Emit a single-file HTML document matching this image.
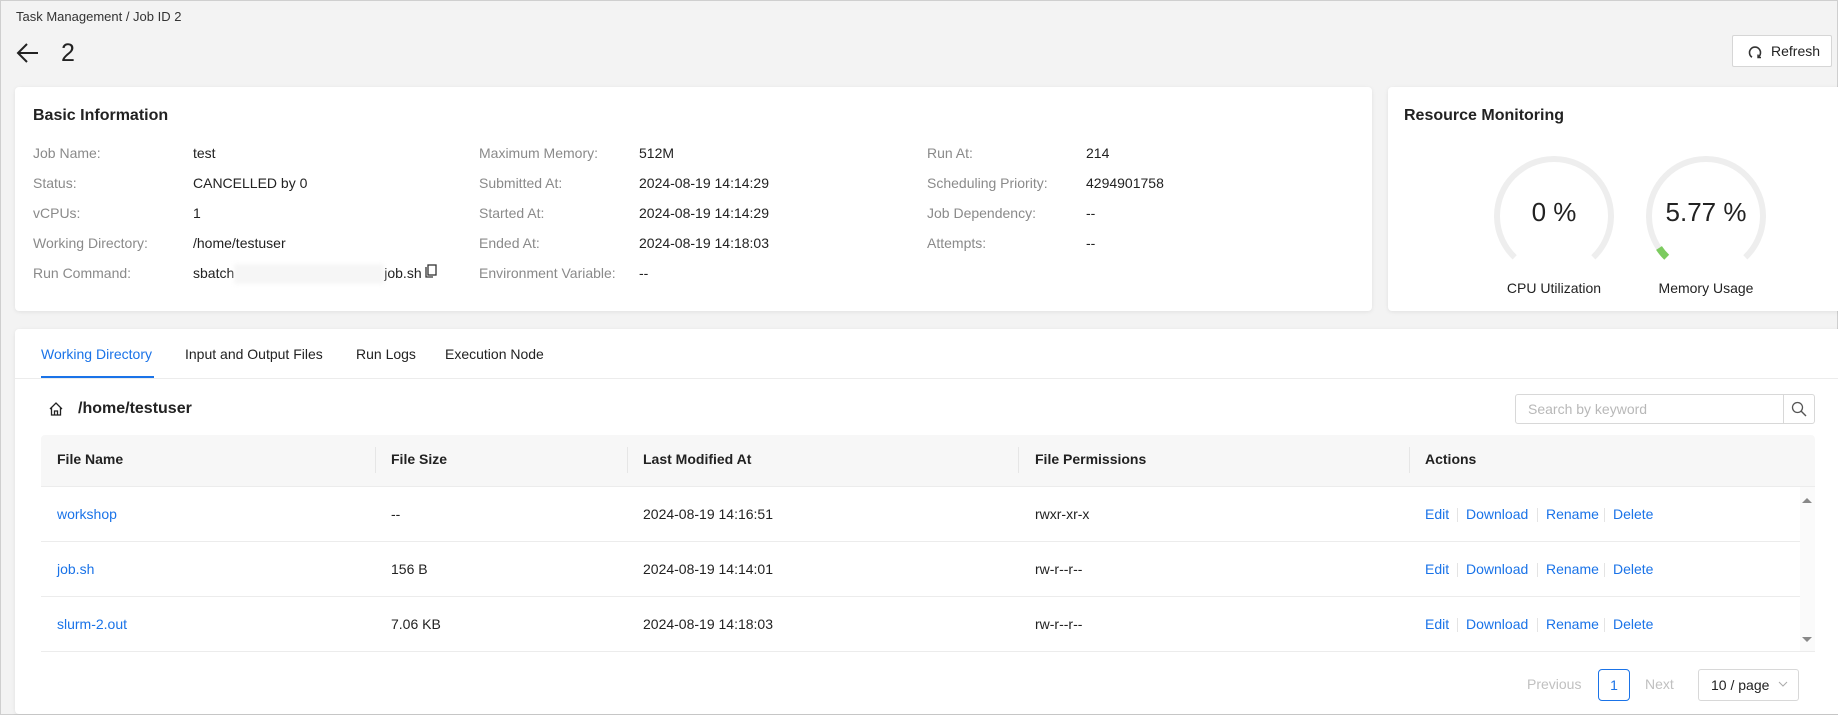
<!DOCTYPE html>
<html><head><meta charset="utf-8"><style>
*{box-sizing:border-box;margin:0;padding:0}
body{width:1838px;height:715px;background:#f3f3f3;font-family:"Liberation Sans",sans-serif;color:#222;position:relative;overflow:hidden;border:1px solid #cfcfcf;font-size:14px}
.a{position:absolute;white-space:nowrap}
.card{position:absolute;background:#fff;border-radius:4px;box-shadow:0 1px 4px rgba(0,0,0,.08)}
.lbl{color:#8a8a8a}
.blue{color:#1a73e8}
.hd{font-weight:bold;font-size:16px;color:#222}
.sep{position:absolute;width:1px;height:14px;background:#e4e4e4}
.line{position:absolute;height:1px;background:#ececec}
</style></head><body>
<div class="a" style="left:15px;top:8px;font-size:13px;color:#333">Task Management / Job ID 2</div>
<svg class="a" style="left:15px;top:41px" width="24" height="22" viewBox="0 0 24 22"><path d="M22 11H3M11 2L2 11l9 9" stroke="#222" stroke-width="2" fill="none"/></svg>
<div class="a" style="left:60px;top:38px;font-size:25px;color:#222">2</div>
<div class="a" style="left:1731px;top:34px;width:100px;height:32px;background:#fff;border:1px solid #d6d6d6;border-radius:2px;font-size:14px;line-height:30px;padding-left:38px">Refresh</div>
<svg class="a" style="left:1747px;top:44px" width="14" height="14" viewBox="0 0 14 14"><path d="M4 12.2A5.5 5.5 0 1 1 10 12.2" stroke="#333" stroke-width="1.6" fill="none"/><path d="M10 9.5v3h3" stroke="#333" stroke-width="1.4" fill="none"/></svg>

<div class="card" style="left:14px;top:86px;width:1357px;height:224px"></div>
<div class="a hd" style="left:32px;top:106px">Basic Information</div>
<div class="a lbl" style="left:32px;top:137px;line-height:30px">Job Name:<br>Status:<br>vCPUs:<br>Working Directory:<br>Run Command:</div>
<div class="a" style="left:192px;top:137px;line-height:30px">test<br>CANCELLED by 0<br>1<br>/home/testuser<br>sbatch<span style="display:inline-block;width:150px;height:20px;background:#f6f6f6;vertical-align:middle;filter:blur(2px)"></span>job.sh</div>
<svg class="a" style="left:424px;top:263px" width="12" height="14" viewBox="0 0 12 14"><rect x="3" y="1" width="8" height="10" stroke="#333" stroke-width="1.3" fill="none"/><path d="M1 3v10h7" stroke="#333" stroke-width="1.3" fill="none"/></svg>
<div class="a lbl" style="left:478px;top:137px;line-height:30px">Maximum Memory:<br>Submitted At:<br>Started At:<br>Ended At:<br>Environment Variable:</div>
<div class="a" style="left:638px;top:137px;line-height:30px">512M<br>2024-08-19 14:14:29<br>2024-08-19 14:14:29<br>2024-08-19 14:18:03<br>--</div>
<div class="a lbl" style="left:926px;top:137px;line-height:30px">Run At:<br>Scheduling Priority:<br>Job Dependency:<br>Attempts:</div>
<div class="a" style="left:1085px;top:137px;line-height:30px">214<br>4294901758<br>--<br>--</div>

<div class="card" style="left:1387px;top:86px;width:460px;height:224px"></div>
<div class="a hd" style="left:1403px;top:106px">Resource Monitoring</div>
<svg class="a" style="left:1480px;top:140px" width="320" height="140" viewBox="0 0 320 140">
<path d="M33.7 116.3A57 57 0 1 1 112.3 116.3" stroke="#eeeeee" stroke-width="6" fill="none"/>
<path d="M185.7 116.3A57 57 0 1 1 264.3 116.3" stroke="#eeeeee" stroke-width="6" fill="none"/>
<path d="M185.7 116.3A57 57 0 0 1 178 107" stroke="#7ccb5f" stroke-width="7" fill="none"/>
<text x="73" y="80" font-size="26" text-anchor="middle" fill="#222" font-family="Liberation Sans">0 %</text>
<text x="225" y="80" font-size="26" text-anchor="middle" fill="#222" font-family="Liberation Sans">5.77 %</text>
</svg>
<div class="a" style="left:1553px;top:279px;transform:translateX(-50%);font-size:14px">CPU Utilization</div>
<div class="a" style="left:1705px;top:279px;transform:translateX(-50%);font-size:14px">Memory Usage</div>

<div class="card" style="left:14px;top:328px;width:1830px;height:385px"></div>
<div class="a blue" style="left:40px;top:345px">Working Directory</div>
<div class="a" style="left:184px;top:345px">Input and Output Files</div>
<div class="a" style="left:355px;top:345px">Run Logs</div>
<div class="a" style="left:444px;top:345px">Execution Node</div>
<div class="a" style="left:40px;top:375px;width:113px;height:2px;background:#1a73e8"></div>
<div class="line" style="left:14px;top:377px;width:1824px"></div>
<svg class="a" style="left:47px;top:400px" width="16" height="16" viewBox="0 0 16 16"><path d="M2 8L8 2l6 6M3.5 6.5V14h9V6.5M6.5 14v-4h3v4" stroke="#222" stroke-width="1.3" fill="none"/></svg>
<div class="a" style="left:77px;top:399px;font-size:16px;font-weight:bold;color:#222">/home/testuser</div>
<div class="a" style="left:1514px;top:393px;width:300px;height:30px;border:1px solid #d8d8d8;border-radius:3px;color:#b8b8b8;line-height:28px;padding-left:12px">Search by keyword</div>
<div class="a" style="left:1782px;top:394px;width:1px;height:28px;background:#d8d8d8"></div>
<svg class="a" style="left:1790px;top:400px" width="16" height="16" viewBox="0 0 16 16"><circle cx="6.5" cy="6.5" r="5" stroke="#555" stroke-width="1.3" fill="none"/><path d="M10 10l5 5" stroke="#555" stroke-width="1.4"/></svg>

<div class="a" style="left:40px;top:434px;width:1774px;height:51px;background:#f7f7f7;border-radius:4px 4px 0 0"></div>
<div class="a" style="left:56px;top:450px;font-weight:bold">File Name</div>
<div class="a" style="left:390px;top:450px;font-weight:bold">File Size</div>
<div class="a" style="left:642px;top:450px;font-weight:bold">Last Modified At</div>
<div class="a" style="left:1034px;top:450px;font-weight:bold">File Permissions</div>
<div class="a" style="left:1424px;top:450px;font-weight:bold">Actions</div>
<div class="a" style="left:374px;top:446px;width:1px;height:26px;background:#e6e6e6"></div>
<div class="a" style="left:626px;top:446px;width:1px;height:26px;background:#e6e6e6"></div>
<div class="a" style="left:1017px;top:446px;width:1px;height:26px;background:#e6e6e6"></div>
<div class="a" style="left:1408px;top:446px;width:1px;height:26px;background:#e6e6e6"></div>
<div class="line" style="left:40px;top:485px;width:1774px"></div>
<div class="a" style="left:1799px;top:486px;width:15px;height:165px;background:#fafafa"></div>
<div class="a" style="left:1801px;top:497px;width:0;height:0;border-left:5px solid transparent;border-right:5px solid transparent;border-bottom:5px solid #888"></div>
<div class="a" style="left:1801px;top:636px;width:0;height:0;border-left:5px solid transparent;border-right:5px solid transparent;border-top:5px solid #888"></div>

<div class="a blue" style="left:56px;top:505px">workshop</div><div class="a" style="left:390px;top:505px">--</div><div class="a" style="left:642px;top:505px">2024-08-19 14:16:51</div><div class="a" style="left:1034px;top:505px">rwxr-xr-x</div>
<div class="line" style="left:40px;top:540px;width:1759px"></div>
<div class="a blue" style="left:56px;top:560px">job.sh</div><div class="a" style="left:390px;top:560px">156 B</div><div class="a" style="left:642px;top:560px">2024-08-19 14:14:01</div><div class="a" style="left:1034px;top:560px">rw-r--r--</div>
<div class="line" style="left:40px;top:595px;width:1759px"></div>
<div class="a blue" style="left:56px;top:615px">slurm-2.out</div><div class="a" style="left:390px;top:615px">7.06 KB</div><div class="a" style="left:642px;top:615px">2024-08-19 14:18:03</div><div class="a" style="left:1034px;top:615px">rw-r--r--</div>
<div class="line" style="left:40px;top:650px;width:1774px"></div>

<div class="a blue" style="left:1424px;top:505px">Edit</div><div class="a blue" style="left:1465px;top:505px">Download</div><div class="a blue" style="left:1545px;top:505px">Rename</div><div class="a blue" style="left:1612px;top:505px">Delete</div>
<div class="a blue" style="left:1424px;top:560px">Edit</div><div class="a blue" style="left:1465px;top:560px">Download</div><div class="a blue" style="left:1545px;top:560px">Rename</div><div class="a blue" style="left:1612px;top:560px">Delete</div>
<div class="a blue" style="left:1424px;top:615px">Edit</div><div class="a blue" style="left:1465px;top:615px">Download</div><div class="a blue" style="left:1545px;top:615px">Rename</div><div class="a blue" style="left:1612px;top:615px">Delete</div>
<div class="sep" style="left:1456px;top:507px"></div><div class="sep" style="left:1536px;top:507px"></div><div class="sep" style="left:1603px;top:507px"></div>
<div class="sep" style="left:1456px;top:562px"></div><div class="sep" style="left:1536px;top:562px"></div><div class="sep" style="left:1603px;top:562px"></div>
<div class="sep" style="left:1456px;top:617px"></div><div class="sep" style="left:1536px;top:617px"></div><div class="sep" style="left:1603px;top:617px"></div>

<div class="a" style="left:1526px;top:675px;color:#c0c0c0">Previous</div>
<div class="a blue" style="left:1597px;top:668px;width:32px;height:32px;border:1px solid #1a73e8;border-radius:4px;text-align:center;line-height:30px">1</div>
<div class="a" style="left:1644px;top:675px;color:#c0c0c0">Next</div>
<div class="a" style="left:1697px;top:668px;width:101px;height:32px;border:1px solid #d8d8d8;border-radius:3px;line-height:30px;padding-left:12px">10 / page</div>
<svg class="a" style="left:1777px;top:680px" width="10" height="7" viewBox="0 0 10 7"><path d="M1 1l4 4 4-4" stroke="#aaa" fill="none"/></svg>
</body></html>
